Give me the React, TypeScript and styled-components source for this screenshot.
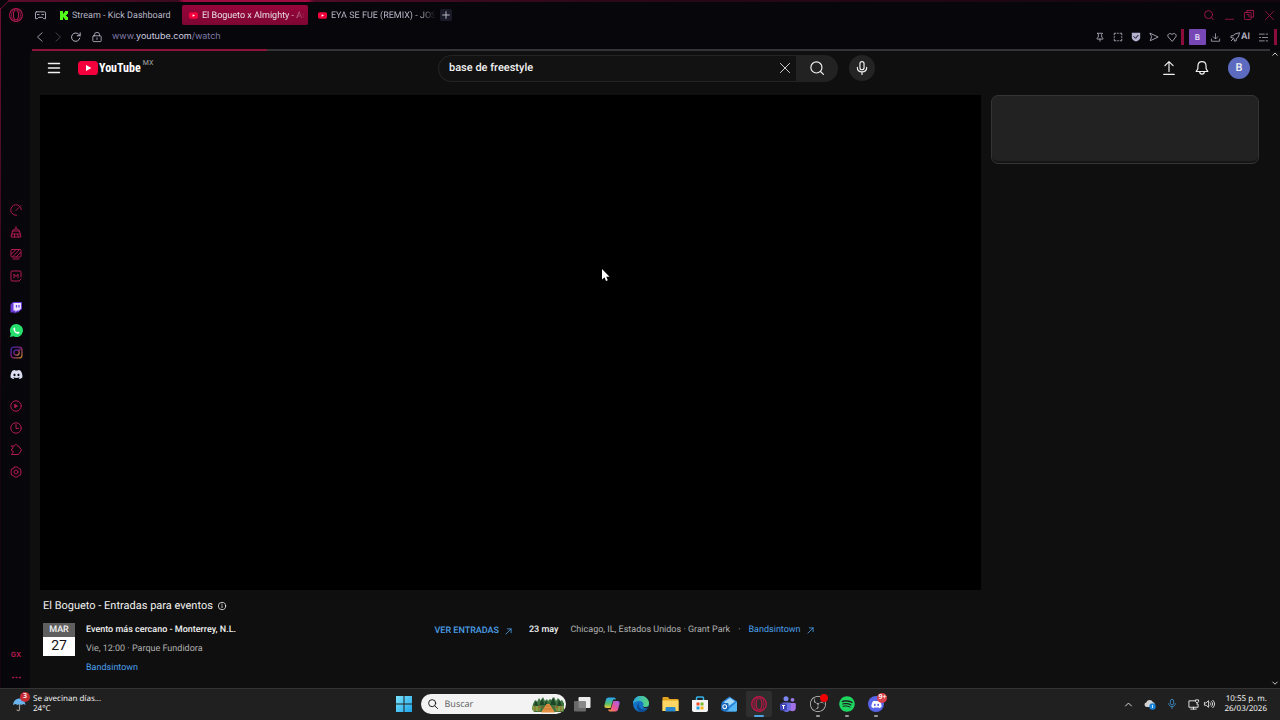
import React from "react";
import styled, { createGlobalStyle, css } from "styled-components";
import { FaDiscord, FaSpotify } from "react-icons/fa";
import { SiObsstudio } from "react-icons/si";

const crimson = "#b31a4e";
const chromeBg = "#06060b";
const pageBg = "#0f0f0f";

const GlobalStyle = createGlobalStyle`
  * { box-sizing: border-box; }
  body {
    margin: 0;
    background: #000;
    color: #f1f1f1;
    font-family: Roboto, "Liberation Sans", sans-serif;
    text-rendering: geometricPrecision;
  }
  button, input { font: inherit; color: inherit; border: 0; padding: 0; background: none; outline: none; text-rendering: inherit; }
  a { text-decoration: none; }
  svg { display: block; flex: none; }
`;

/* ---------- shared ---------- */

const Icon = styled.svg.attrs({ viewBox: "0 0 24 24", "aria-hidden": true })<{ $size?: number; $weight?: number }>`
  width: ${(p) => p.$size ?? 12}px;
  height: ${(p) => p.$size ?? 12}px;
  fill: none;
  stroke: currentColor;
  stroke-width: ${(p) => p.$weight ?? 2};
  stroke-linecap: round;
  stroke-linejoin: round;
  overflow: visible;
`;

const IconButton = styled.button<{ $w?: number; $h?: number }>`
  display: flex;
  align-items: center;
  justify-content: center;
  flex: none;
  width: ${(p) => p.$w ?? 20}px;
  height: ${(p) => p.$h ?? 20}px;
`;

const Screen = styled.div`
  display: flex;
  flex-direction: column;
  min-height: 100vh;
`;

const Browser = styled.div`
  position: relative;
  display: flex;
  flex: 1;
  background: ${chromeBg};
`;

const FrameTop = styled.div`
  position: absolute;
  top: 0;
  left: 8px;
  right: 0;
  height: 2px;
  background: linear-gradient(90deg, #5c0c2b 0, #3a0a1f 170px, #a00a3e 176px, #a00a3e 300px, #4d0b26 306px, #2b0817 600px, #14060e 100%);
`;

const FrameLeft = styled.div`
  position: absolute;
  top: 8px;
  bottom: 0;
  left: 0;
  width: 1px;
  background: linear-gradient(180deg, #6b0f33 0, #3a0a1f 240px, #14060c 400px);
`;

const FrameCorner = styled.svg`
  position: absolute;
  top: 0;
  left: 0;
  width: 10px;
  height: 10px;
  stroke: #7a1038;
  fill: none;
`;

/* ---------- sidebar ---------- */

const Sidebar = styled.aside`
  display: flex;
  flex-direction: column;
  align-items: center;
  flex: none;
  width: 30px;
  padding-left: 2px;
  color: ${crimson};
`;

const SideLogo = styled.button`
  display: flex;
  justify-content: center;
  width: 100%;
  height: 38px;
  padding-top: 8px;
  color: ${crimson};
`;

const SideNav = styled.nav`
  display: flex;
  flex: 1;
  flex-direction: column;
  justify-content: center;
  gap: 10px;
`;

const SideGroup = styled.div`
  display: flex;
  flex-direction: column;
`;

const SideFoot = styled.div`
  display: flex;
  flex-direction: column;
  height: 44px;
  font: 700 7px/8px Inter, sans-serif;
`;

/* ---------- tabs and address bar ---------- */

const Main = styled.div`
  display: flex;
  flex: 1;
  flex-direction: column;
  min-width: 0;
`;

const TabBar = styled.div`
  display: flex;
  align-items: center;
  gap: 3px;
  height: 25px;
  padding: 5px 1px 0 0;
  color: #b8b6c6;
`;

const Tab = styled.button<{ $active?: boolean }>`
  display: flex;
  align-items: center;
  gap: 4px;
  width: 126px;
  height: 20px;
  padding: 0 6px 0 7px;
  border-radius: 2px;
  font: 400 9px/12px Roboto, sans-serif;
  white-space: nowrap;
  ${(p) =>
    p.$active &&
    css`
      background: linear-gradient(180deg, #98053a, #7d0633);
      color: #eadfe6;
    `}
`;

const TabTitle = styled.span<{ $fade?: boolean }>`
  padding-top: 1px;
  text-align: left;
  ${(p) => p.$fade && css`mask-image: linear-gradient(90deg, #000 85%, transparent);`}
`;

const NewTab = styled.button`
  display: flex;
  align-items: center;
  justify-content: center;
  width: 12px;
  height: 12px;
  border-radius: 2px;
  background: #1b1a28;
`;

const Spacer = styled.div`
  flex: 1;
`;

const WindowControls = styled.div`
  display: flex;
  color: ${crimson};
`;

const AddressBar = styled.div`
  display: flex;
  align-items: center;
  height: 24px;
  color: #b8b6c6;
`;

const Url = styled.a`
  margin-left: 4px;
  font: 400 9px/14px Inter, sans-serif;
  color: #7f7aa6;
  b { font-weight: 400; color: #cfcde0; }
`;

const RedBar = styled.span<{ $gap: number }>`
  width: 3px;
  height: 16px;
  margin-right: ${(p) => p.$gap}px;
  background: #8a0d3a;
`;

const ProfileBadge = styled.button`
  width: 17px;
  height: 16px;
  border-radius: 1px;
  background: #7747b5;
  color: #f2ecff;
  font: 500 8px/16px Inter, sans-serif;
`;

const AiButton = styled.button`
  display: flex;
  align-items: center;
  gap: 1px;
  margin: 0 2px 0 4px;
  font: 600 9px/12px Inter, sans-serif;
`;

const LoadLine = styled.div`
  height: 2px;
  margin: 0 10px 0 2px;
  background: linear-gradient(90deg, #8f1239 19%, #343436 19%);
`;

/* ---------- youtube page ---------- */

const Viewport = styled.div`
  display: flex;
  flex: 1;
  background: ${pageBg};
  border-top-left-radius: 3px;
`;

const ScrollTrack = styled.div`
  display: flex;
  flex-direction: column;
  justify-content: space-between;
  flex: none;
  width: 10px;
  padding: 0 2px 2px;
  color: #c8c8c8;
`;

const Page = styled.main`
  flex: 1;
  min-width: 0;
`;

const Masthead = styled.header`
  display: flex;
  align-items: center;
  justify-content: space-between;
  height: 34px;
  padding: 0 20px 0 18px;
`;

const Brand = styled.div`
  display: flex;
  align-items: center;
  gap: 18px;
  width: 103px;
`;

const LogoLink = styled.a`
  display: flex;
  align-items: center;
  color: #fff;
`;

const Wordmark = styled.span`
  margin-left: 1px;
  font: 700 12px/16px "Liberation Sans Narrow", "Roboto Condensed", Roboto, sans-serif;
  text-rendering: auto;
`;

const Country = styled.sup`
  align-self: flex-start;
  margin-left: 2px;
  font: 400 7px/7px Roboto, sans-serif;
  color: #aaa;
`;

const SearchArea = styled.div`
  display: flex;
  align-items: center;
  flex: 0 1 437px;
  gap: 11px;
`;

const SearchForm = styled.form`
  display: flex;
  flex: 1;
  height: 27px;
`;

const SearchBox = styled.div`
  display: flex;
  align-items: center;
  flex: 1;
  border: 1px solid #242424;
  border-right: 0;
  border-radius: 14px 0 0 14px;
  background: #121212;
  input {
    flex: 1;
    min-width: 0;
    padding-left: 10px;
    font: 500 11px/16px Roboto, sans-serif;
  }
`;

const SearchButton = styled.button`
  display: flex;
  align-items: center;
  justify-content: center;
  width: 42px;
  border-radius: 0 14px 14px 0;
  background: #222;
`;

const MicButton = styled.button`
  display: flex;
  align-items: center;
  justify-content: center;
  width: 26px;
  height: 26px;
  border-radius: 50%;
  background: #242424;
`;

const Actions = styled.div`
  display: flex;
  align-items: center;
  gap: 19px;
`;

const Avatar = styled.button`
  width: 22px;
  height: 22px;
  border-radius: 50%;
  background: #5c6bc0;
  font: 500 11px/22px Roboto, sans-serif;
`;

const Watch = styled.div`
  display: flex;
  align-items: flex-start;
  gap: 10px;
  padding: 10px 11px 0 10px;
`;

const Primary = styled.section`
  flex: 1;
  min-width: 0;
`;

const Player = styled.div`
  position: relative;
  aspect-ratio: 19 / 10;
  background: #000;
`;

const Pointer = styled.svg`
  position: absolute;
  left: 561px;
  top: 173px;
  width: 9px;
  height: 14px;
`;

const SideCard = styled.aside`
  flex: none;
  width: 268px;
  height: 69px;
  border: 1px solid #343434;
  border-radius: 7px;
  background: #222;
  box-shadow: inset 0 -2px #151515;
`;

const Events = styled.div`
  padding: 9px 0 0 3px;
`;

const EventsTitle = styled.h2`
  display: flex;
  align-items: center;
  gap: 5px;
  margin: 0;
  font: 400 11px/14px Roboto, sans-serif;
`;

const EventRow = styled.div`
  display: flex;
  align-items: flex-start;
  gap: 17px;
  margin-top: 8px;
`;

const NextEvent = styled.div`
  display: flex;
  align-items: flex-start;
  flex: none;
  width: 50%;
`;

const DateTile = styled.time`
  width: 32px;
  margin: 2px 11px 0 0;
  text-align: center;
  color: #111;
  background: #fff;
  font: 400 14px/19px Roboto, sans-serif;
  span {
    display: block;
    background: #5f5f5f;
    color: #f1f1f1;
    font: 500 9px/14px Roboto, sans-serif;
  }
`;

const EventText = styled.div`
  flex: 1;
  font: 400 9px/19px Roboto, sans-serif;
  color: #b0b0b0;
  strong { display: block; font-weight: 500; color: #f1f1f1; }
`;

const BlueLink = styled.a<{ $strong?: boolean }>`
  display: flex;
  align-items: center;
  gap: 6px;
  color: #4a9fe8;
  font: 400 9px/19px Roboto, sans-serif;
  ${(p) => p.$strong && css`font-weight: 500; line-height: 21px;`}
`;

const LaterEvent = styled.div`
  display: flex;
  font: 400 9px/19px Roboto, sans-serif;
  color: #b0b0b0;
  white-space: nowrap;
  strong { margin-right: 12px; font-weight: 500; color: #f1f1f1; }
  i { margin: 0 8px; font-style: normal; }
`;

/* ---------- taskbar ---------- */

const Taskbar = styled.footer`
  display: grid;
  grid-template-columns: 1fr auto 1fr;
  align-items: center;
  height: 32px;
  box-shadow: inset 0 1px #343434;
  background: #202020;
  font: 400 8px/10px "Noto Sans", sans-serif;
`;

const Weather = styled.button`
  display: flex;
  align-items: center;
  gap: 6px;
  padding-left: 12px;
  text-align: left;
  span { display: block; }
`;

const Badged = styled.div`
  position: relative;
`;

const Badge = styled.em<{ $x: number; $y: number; $bg?: string; $size?: number }>`
  position: absolute;
  top: ${(p) => p.$y}px;
  left: ${(p) => p.$x}px;
  width: ${(p) => p.$size ?? 10}px;
  height: ${(p) => p.$size ?? 10}px;
  border-radius: 50%;
  background: ${(p) => p.$bg ?? "#c42b32"};
  color: #fff;
  text-align: center;
  font: 600 7px/10px "Noto Sans", sans-serif;
`;

const Dock = styled.div`
  display: flex;
  align-items: center;
  gap: 4px;
`;

const TaskSearch = styled.label`
  display: flex;
  align-items: center;
  gap: 7px;
  width: 145px;
  height: 20px;
  padding: 0 2px 0 7px;
  border-radius: 10px;
  background: #f3f3f3;
  color: #222;
  input { flex: 1; min-width: 0; font: 400 9px/14px "Noto Sans", sans-serif; }
  input::placeholder { color: #666; opacity: 1; }
`;

const Apps = styled.div`
  display: flex;
  justify-content: space-between;
  width: 320px;
`;

const DockApp = styled.button<{ $current?: boolean; $running?: boolean }>`
  position: relative;
  display: flex;
  align-items: center;
  justify-content: center;
  width: 26px;
  height: 26px;
  border-radius: 2px;
  background: ${(p) => (p.$current ? "#2e2e2e" : "none")};
  ${(p) =>
    (p.$current || p.$running) &&
    css`
      &::after {
        content: "";
        position: absolute;
        bottom: 0;
        left: 50%;
        width: ${p.$current ? 10 : 4}px;
        height: 2px;
        border-radius: 1px;
        transform: translateX(-50%);
        background: ${p.$current ? "#4ca3e0" : "#9a9a9a"};
      }
    `}
`;

const OperaHolder = styled.span`
  color: #c8144a;
`;

const DiscordDisc = styled.span`
  display: flex;
  align-items: center;
  justify-content: center;
  width: 16px;
  height: 16px;
  border-radius: 50%;
  background: #5865e8;
`;

const Tray = styled.div`
  display: flex;
  align-items: center;
  justify-content: flex-end;
  padding-right: 13px;
`;

const BlueMic = styled.span`
  color: #3f93cf;
`;

const Clock = styled.time`
  width: 52px;
  text-align: right;
  span { display: block; }
`;

/* ---------- drawings ---------- */

const OperaMark = ({ size = 15 }: { size?: number }) => (
  <Icon $size={size} $weight={1.8}>
    <circle cx="12" cy="12" r="11" />
    <ellipse cx="12" cy="12" rx="4.4" ry="8.6" />
    <path d="M14 1.500c4 2 5.600 6 5.600 10.500S18 20.500 14 22.500M10 1.500C6 3.500 4.400 7.500 4.400 12S6 20.500 10 22.500" strokeWidth="1.200" />
  </Icon>
);

const PlayTile = ({ w, h }: { w: number; h: number }) => (
  <svg width={w} height={h} viewBox="0 0 20 14" aria-hidden>
    <rect width="20" height="14" rx="3.600" fill="#f4003d" />
    <path d="M8 4l5.400 3L8 10z" fill="#fff" />
  </svg>
);

const KickMark = () => (
  <svg width="8" height="9" viewBox="0 0 8 9" aria-hidden>
    <path d="M0 0h3v2.500h1v-1.200h1V0h3v3H7v1H6v1h1v1h1v3H5V7.700H4V6.500H3V9H0z" fill="#53fc18" />
  </svg>
);

const TwitchMark = () => (
  <svg width="12" height="12" viewBox="0 0 24 24" aria-hidden>
    <path d="M6 0h18v14l-8 7h-4l-3 3v-3H1V5z" fill="#6a3ad6" />
    <path d="M7 2h15v11l-4 4h-4l-3 3v-3H7z" fill="#e9e1ff" />
    <path d="M13 6v5M18 6v5" stroke="#6a3ad6" strokeWidth="2.400" />
  </svg>
);

const WhatsappMark = () => (
  <svg width="13" height="13" viewBox="0 0 24 24" aria-hidden>
    <path d="M12 0a12 12 0 1 1-5.500 22.700L0 24l1.500-6A12 12 0 0 1 12 0z" fill="#25e06c" />
    <path d="M8 6C5 8 6 12 9 15s7 4 9 1l-3-2-2 1c-2-.8-3-2-4-4l1-1.500z" fill="#fff" />
  </svg>
);

const InstagramMark = () => (
  <svg width="13" height="13" viewBox="0 0 24 24" fill="none" stroke="url(#ig)" strokeWidth="2.400" aria-hidden>
    <defs>
      <linearGradient id="ig" x1="0" y1="0" x2="1" y2="1">
        <stop offset="0" stopColor="#3f2bb0" />
        <stop offset=".5" stopColor="#8a2080" />
        <stop offset="1" stopColor="#b8862a" />
      </linearGradient>
    </defs>
    <rect x="2" y="2" width="20" height="20" rx="5" />
    <circle cx="12" cy="12" r="5" />
    <circle cx="17.500" cy="6.500" r=".6" />
  </svg>
);

const Arrow = () => (
  <Icon $size={7} $weight={2.8}><path d="M3 21L21 3M8 3h13v13" /></Icon>
);

const Umbrella = () => (
  <svg width="15" height="16" viewBox="0 0 15 16" aria-hidden>
    <path d="M1 9C1.500 4.500 4.500 2.500 7.500 2.500S13 4.500 13.500 9l-2-1-2 1-2-1-2 1-2-1z" fill="#68b4ee" />
    <path d="M7.500 8v5.500c0 1.500-2.500 1.500-2.500 0" fill="none" stroke="#9a9a9a" strokeWidth="1.200" />
  </svg>
);

const WindowsMark = () => (
  <svg width="16" height="16" viewBox="0 0 16 16" aria-hidden>
    <defs>
      <linearGradient id="win" x1="0" y1="0" x2="1" y2="1">
        <stop offset="0" stopColor="#7be3fb" />
        <stop offset="1" stopColor="#1ea5ea" />
      </linearGradient>
    </defs>
    <path d="M0 0h7.500v7.500H0zM8.500 0H16v7.500H8.500zM0 8.500h7.500V16H0zM8.500 8.500H16V16H8.500z" fill="url(#win)" />
  </svg>
);

const Forest = () => (
  <svg width="32" height="17" viewBox="0 0 32 17" aria-hidden>
    <path d="M1 8l2-4 2 2 2-4 2 3 2-4 2 4 2-2 1 2 2-2 2 1 2-3 2 4 2-3 2 3 2-1 3 5v5l-2 2H2l-2-3z" fill="#3d7440" />
    <path d="M4 4l-2 6h4zM10 2L7.500 9h5zM14 4l-1.500 5h3zM21 1l-3 8h6zM27 3l-2 7h5z" fill="#1b4429" />
    <path d="M0 10h9l-1 5H1zM23 10h9l-1 5h-7z" fill="#86a348" />
    <path d="M14.500 8h3L23 16.500H9z" fill="#e39142" />
    <path d="M3 9v7M7 9v7M25 9v7M29 9v7M6 11h6M21 11h6" stroke="#8a5a2a" strokeWidth=".8" />
    <path d="M14 10h4M12.500 13h7" stroke="#b56c2c" strokeWidth=".6" />
  </svg>
);

const TaskViewMark = () => (
  <svg width="17" height="15" viewBox="0 0 17 15" aria-hidden>
    <rect x="4.500" y="0" width="12" height="11" rx="1" fill="#ececec" />
    <rect x="0" y="4" width="12" height="10.500" rx="1" fill="#777" opacity=".85" />
  </svg>
);

const CopilotMark = () => (
  <svg width="16" height="15" viewBox="0 0 16 15" aria-hidden>
    <defs>
      <linearGradient id="cpl" x1="0" y1="0" x2="0" y2="1">
        <stop offset="0" stopColor="#27a5f5" />
        <stop offset=".6" stopColor="#58c06a" />
        <stop offset="1" stopColor="#f1c53a" />
      </linearGradient>
      <linearGradient id="cpr" x1="1" y1="0" x2="0" y2="1">
        <stop offset="0" stopColor="#a05cf0" />
        <stop offset=".6" stopColor="#f0588c" />
        <stop offset="1" stopColor="#f99a3c" />
      </linearGradient>
    </defs>
    <path d="M4.500.5H10c1.200 0 1.600.8 1.900 2H9.200L6.600 11H2.500C.8 11 0 9.800.5 8l1.500-5.500C2.400 1.200 3.200.5 4.500.5z" fill="url(#cpl)" />
    <path d="M11.500 14.500H6c-1.200 0-1.600-.8-1.900-2h2.700L9.400 4h4.100c1.700 0 2.500 1.200 2 3L14 12.500c-.4 1.300-1.200 2-2.500 2z" fill="url(#cpr)" />
  </svg>
);

const EdgeMark = () => (
  <svg width="16" height="16" viewBox="0 0 16 16" aria-hidden>
    <defs>
      <linearGradient id="edg" x1="0" y1="0" x2="1" y2="0">
        <stop offset="0" stopColor="#2aa5df" />
        <stop offset="1" stopColor="#5bd67b" />
      </linearGradient>
    </defs>
    <circle cx="8" cy="8" r="8" fill="#1471c4" />
    <path d="M0 8a8 8 0 0 1 16-.500c0 2.500-2 3.500-4 3.500-1.500 0-2.500-.8-2-1.500C11.200 7.500 9.500 5 6.500 5 3 5 .5 6.500 0 8z" fill="url(#edg)" />
    <path d="M6.500 6.500C5 8 5.500 13 10 13.500c2 .2 4-.500 5-2-1.500 3-4.500 4.500-7 4.500-4-1-5.500-6.500-1.500-9.500z" fill="#0b4a94" />
    <path d="M10 10c1.500 1.500 4 1.500 5.500.500l-.800 1.500c-2 1-4.200.3-4.700-2z" fill="#202020" />
  </svg>
);

const FolderMark = () => (
  <svg width="17" height="15" viewBox="0 0 17 15" aria-hidden>
    <path d="M.5 1C.5.5 1 0 1.500 0H6l1.500 2H15.500c.6 0 1 .4 1 1v11H.5z" fill="#e2a21d" />
    <path d="M.5 3.500h16V14H.5z" fill="#fbd664" />
    <path d="M3.500 14.500v-3c0-1 .5-1.500 1.500-1.500h7c1 0 1.500.5 1.500 1.500v3z" fill="#2787cc" />
  </svg>
);

const StoreMark = () => (
  <svg width="16" height="16" viewBox="0 0 16 16" aria-hidden>
    <path d="M4.500 4V2c0-.6.400-1 1-1h5c.6 0 1 .4 1 1v2" fill="none" stroke="#35b3ea" strokeWidth="1.500" />
    <path d="M0 4h16v10c0 1-.8 2-2 2H2c-1.200 0-2-1-2-2z" fill="#f4f4f4" />
    <path d="M4.500 6.500h3v3h-3z" fill="#ee4d2c" /><path d="M8.500 6.500h3v3h-3z" fill="#7cb928" />
    <path d="M4.500 10.500h3v3h-3z" fill="#219fe3" /><path d="M8.500 10.500h3v3h-3z" fill="#f9b51c" />
  </svg>
);

const OutlookMark = () => (
  <svg width="16" height="16" viewBox="0 0 16 16" aria-hidden>
    <path d="M1 6l7.500-5.500L16 5.500V14c0 1-.8 1.500-1.500 1.500H3L1 14z" fill="#2b84dc" />
    <path d="M3 6l6-4 5 3.500-7 5z" fill="#a5dafa" />
    <path d="M16 6v8c0 1-.8 1.500-1.500 1.500H5z" fill="#56b6f3" />
    <rect x="0" y="7" width="7.500" height="7.500" rx="1.200" fill="#1764ba" />
    <circle cx="3.700" cy="10.700" r="1.900" fill="none" stroke="#fff" strokeWidth="1.100" />
  </svg>
);

const TeamsMark = () => (
  <svg width="16" height="16" viewBox="0 0 16 16" aria-hidden>
    <circle cx="6" cy="2.700" r="2.500" fill="#7c86f0" /><circle cx="12.500" cy="3.800" r="1.900" fill="#9a7bea" />
    <path d="M9 7h5.500c.8 0 1.300.500 1.300 1.300V12c0 2-1.500 3.300-3.300 3.300S9 14 9 12z" fill="#a370e8" />
    <path d="M2.500 6.500h7c.7 0 1.200.5 1.200 1.200V12c0 2.200-1.800 4-4.200 4s-4-1.800-4-4z" fill="#6c6fe4" />
    <rect x="0" y="7.500" width="7" height="7" rx="1" fill="#4046b8" />
    <path d="M2 9.500h3M3.500 9.500v3.500" stroke="#fff" />
  </svg>
);

const CloudMark = () => (
  <svg width="12" height="11" viewBox="0 0 12 11" aria-hidden>
    <path d="M2.500 8a2.300 2.300 0 0 1-.3-4.500A3.500 3.500 0 0 1 8.800 3 2.600 2.600 0 0 1 9 8z" fill="#d2d2d2" />
    <circle cx="8.500" cy="7.500" r="3.200" fill="#1682d8" />
    <path d="M8.500 6v3" stroke="#fff" strokeWidth=".8" />
  </svg>
);

const sideTools = [
  ["GX Control", <><path d="M22.500 11A10.500 10.500 0 1 0 13 22.500" /><path d="M12 13l6-6M21 4l1-1" /></>],
  ["GX Cleaner", <><path d="M12 1v5M6 10c0-3 2-4 6-4s6 1 6 4M5 10h14M5 10L2 22h20l-3-12M4 16h16M9 17v5M15 17l2 5" /></>],
  ["Fondos", <><rect x="2" y="3" width="20" height="15" rx="2" /><path d="M6 22h12M3 12l8-8M6 17L18 4M13 17l8-8" /></>],
  ["GX Mods", <><path d="M22 14V4a2 2 0 0 0-2-2H4a2 2 0 0 0-2 2v16a2 2 0 0 0 2 2h14l4-4" /><path d="M8 16V8l4 5 4-5v8" /></>],
] as const;

const sideExtras = [
  ["Reproductor", <><circle cx="12" cy="12" r="10.500" /><path d="M10 9l5 3-5 3z" fill="currentColor" /></>],
  ["Historial", <><circle cx="12" cy="12" r="10.500" /><path d="M12 5v8h5" /></>],
  ["Extensiones", <path d="M3 4h6c0-4 6-4 6 0h2l6 8-6 9H3l4-6-5-3 4-4z" />],
  ["Configuración", <><path d="M9 2h6l2 3 4 1 1 6-1 6-4 1-2 3H9l-2-3-4-1-1-6 1-6 4-1z" /><circle cx="12" cy="12" r="4" /></>],
] as const;

const SideIcon = ({ label, children }: { label: string; children: React.ReactNode }) => (
  <IconButton $w={22} $h={22} aria-label={label}>{children}</IconButton>
);

const addressTools = [
  ["Fijar", <path d="M6 3h12l-2 3v6l3 3v2H5v-2l3-3V6zM12 17v5" />],
  ["Captura", <path d="M3 7V3h4M17 3h4v4M21 17v4h-4M7 21H3v-4M11 3h2M11 21h2M3 11v2M21 11v2" />],
  ["Escudo", <><path d="M2 2h20v11c0 5-5 8-10 10C7 21 2 18 2 13z" fill="#b4b0cf" stroke="none" /><path d="M7 11l4 4 6-7" stroke={chromeBg} strokeWidth="2.400" /></>],
  ["Mi Flow", <path d="M3 3l19 9-19 9 3-9z" />],
  ["Favoritos", <path d="M12 22L3 12C-1 7 6 0 12 6c6-6 13 1 9 6z" />],
] as const;

/* ---------- page ---------- */

export default function App() {
  return (
    <Screen>
      <GlobalStyle />
      <Browser>
        <Sidebar>
          <SideLogo aria-label="Opera GX"><OperaMark size={14} /></SideLogo>
          <SideNav aria-label="Barra lateral">
            <SideGroup>
              {sideTools.map(([label, art]) => (
                <SideIcon key={label} label={label}><Icon $size={12}>{art}</Icon></SideIcon>
              ))}
            </SideGroup>
            <SideGroup>
              <SideIcon label="Twitch"><TwitchMark /></SideIcon>
              <SideIcon label="WhatsApp"><WhatsappMark /></SideIcon>
              <SideIcon label="Instagram"><InstagramMark /></SideIcon>
              <SideIcon label="Discord"><FaDiscord size={13} color="#dcdcf2" /></SideIcon>
            </SideGroup>
            <SideGroup>
              {sideExtras.map(([label, art]) => (
                <SideIcon key={label} label={label}><Icon $size={12}>{art}</Icon></SideIcon>
              ))}
            </SideGroup>
          </SideNav>
          <SideFoot>
            <IconButton $w={22} $h={22}>GX</IconButton>
            <IconButton $w={22} $h={22} aria-label="Más">
              <Icon $size={9}><path d="M2 12h2M11 12h2M20 12h2" strokeWidth="4" /></Icon>
            </IconButton>
          </SideFoot>
        </Sidebar>

        <Main>
          <TabBar>
            <IconButton aria-label="GX Corner">
              <Icon $size={11}><path d="M3 4h18a2 2 0 0 1 2 2v13h-4l-3-3H8l-3 3H1V6a2 2 0 0 1 2-2zM5 10h4M15 10h4" /></Icon>
            </IconButton>
            <Tab><KickMark /><TabTitle>Stream - Kick Dashboard</TabTitle></Tab>
            <Tab $active><PlayTile w={9} h={7} /><TabTitle $fade>El Bogueto x Almighty - Ar</TabTitle></Tab>
            <Tab><PlayTile w={9} h={7} /><TabTitle $fade>EYA SE FUE (REMIX) - JOS</TabTitle></Tab>
            <NewTab aria-label="Nueva pestaña"><Icon $size={8} $weight={3}><path d="M12 2v20M2 12h20" /></Icon></NewTab>
            <Spacer />
            <WindowControls>
              <IconButton aria-label="Buscar pestañas"><Icon $size={10}><circle cx="11" cy="11" r="9.500" /><path d="M18 18l4 5" /></Icon></IconButton>
              <IconButton aria-label="Minimizar"><Icon $size={9}><path d="M1 22h22" /></Icon></IconButton>
              <IconButton aria-label="Restaurar"><Icon $size={10}><rect x="1" y="6" width="16" height="17" rx="2" /><path d="M7 6V1h16v16h-6M7 11h5v6" /></Icon></IconButton>
              <IconButton aria-label="Cerrar"><Icon $size={9}><path d="M1 1l22 22M23 1L1 23" /></Icon></IconButton>
            </WindowControls>
          </TabBar>
          <AddressBar>
            <IconButton $w={19} aria-label="Atrás"><Icon $size={10}><path d="M17 2L6 12l11 10" /></Icon></IconButton>
            <IconButton $w={17} aria-label="Adelante"><Icon $size={10} opacity=".4"><path d="M7 2l11 10L7 22" /></Icon></IconButton>
            <IconButton $w={19} aria-label="Recargar"><Icon $size={10} $weight={2.4}><path d="M21 15a10 10 0 1 1-2-9l3 3M22 2v7h-7" /></Icon></IconButton>
            <IconButton $w={23} aria-label="Sitio seguro"><Icon $size={10}><rect x="2" y="9" width="20" height="14" rx="2" /><path d="M6 9V6a6 5 0 0 1 12 0v3M12 14v4" /></Icon></IconButton>
            <Url href="#watch">www.<b>youtube.com</b>/watch</Url>
            <Spacer />
            {addressTools.map(([label, art]) => (
              <IconButton key={label} $w={18} aria-label={label}><Icon $size={10}>{art}</Icon></IconButton>
            ))}
            <RedBar $gap={5} />
            <ProfileBadge>B</ProfileBadge>
            <IconButton aria-label="Descargas"><Icon $size={9}><path d="M12 2v13M6 10l6 6 6-6M1 16v6h22v-6" /></Icon></IconButton>
            <AiButton>
              <Icon $size={10}><path d="M22 2L11 5 8 9H3l-1 4 7 2 2 7 4-1v-5l4-3zM3 21l4-4" /></Icon>AI
            </AiButton>
            <IconButton $w={22} aria-label="Configuración fácil"><Icon $size={9}><path d="M1 3h13M19 3h4M1 12h3M9 12h14M1 21h13M19 21h4" /></Icon></IconButton>
            <RedBar $gap={3} />
          </AddressBar>
          <LoadLine />

          <Viewport>
            <Page>
              <Masthead>
                <Brand>
                  <button aria-label="Guía"><Icon $size={12} $weight={3}><path d="M1 3h22M1 12h22M1 21h22" /></Icon></button>
                  <LogoLink href="#home">
                    <PlayTile w={20} h={14} /><Wordmark>YouTube</Wordmark><Country>MX</Country>
                  </LogoLink>
                </Brand>
                <SearchArea>
                  <SearchForm onSubmit={(e) => e.preventDefault()}>
                    <SearchBox>
                      <input aria-label="Buscar" defaultValue="base de freestyle" />
                      <IconButton type="button" $w={22} aria-label="Borrar"><Icon $size={10}><path d="M1 1l22 22M23 1L1 23" /></Icon></IconButton>
                    </SearchBox>
                    <SearchButton aria-label="Buscar"><Icon $size={14}><circle cx="11" cy="11" r="9.500" /><path d="M18 18l5 5" /></Icon></SearchButton>
                  </SearchForm>
                  <MicButton aria-label="Buscar por voz">
                    <Icon $size={14}><rect x="8.500" y="1" width="7" height="14" rx="3.500" /><path d="M4 11c0 10 16 10 16 0M12 19v4" /></Icon>
                  </MicButton>
                </SearchArea>
                <Actions>
                  <IconButton $w={14} aria-label="Crear"><Icon $size={14}><path d="M12 18V1M5 8l7-7 7 7M3 23h18" /></Icon></IconButton>
                  <IconButton $w={14} aria-label="Notificaciones"><Icon $size={14}><path d="M12 1c-5 0-7 4-7 8v4l-3 5h20l-3-5V9c0-4-2-8-7-8zM8 18c0 6 8 6 8 0" /></Icon></IconButton>
                  <Avatar>B</Avatar>
                </Actions>
              </Masthead>
              <Watch>
                <Primary>
                  <Player>
                    <Pointer viewBox="0 0 9 14"><path d="M1 1v10.500l2.500-2.200L5 13l1.800-.8L5.200 8.700h3.300z" fill="#fff" /></Pointer>
                  </Player>
                  <Events>
                    <EventsTitle>
                      El Bogueto - Entradas para eventos
                      <Icon $size={8} $weight={2.4}><circle cx="12" cy="12" r="11" /><path d="M12 11v6M12 6v1" /></Icon>
                    </EventsTitle>
                    <EventRow>
                      <NextEvent>
                        <DateTile><span>MAR</span>27</DateTile>
                        <EventText>
                          <strong>Evento más cercano - Monterrey, N.L.</strong>
                          <div>Vie, 12:00 · Parque Fundidora</div>
                          <BlueLink href="#bandsintown">Bandsintown</BlueLink>
                        </EventText>
                        <BlueLink $strong href="#entradas">VER ENTRADAS <Arrow /></BlueLink>
                      </NextEvent>
                      <LaterEvent>
                        <strong>23 may</strong>
                        <span>Chicago, IL, Estados Unidos · Grant Park</span>
                        <i>·</i>
                        <BlueLink href="#grant-park">Bandsintown <Arrow /></BlueLink>
                      </LaterEvent>
                    </EventRow>
                  </Events>
                </Primary>
                <SideCard />
              </Watch>
            </Page>
            <ScrollTrack>
              <Icon $size={6} $weight={4}><path d="M3 17l9-9 9 9" /></Icon>
              <Icon $size={6} $weight={4}><path d="M3 8l9 9 9-9" /></Icon>
            </ScrollTrack>
          </Viewport>
        </Main>
        <FrameTop />
        <FrameLeft />
        <FrameCorner viewBox="0 0 10 10"><path d="M.5 9L9 .5" /></FrameCorner>
      </Browser>

      <Taskbar>
        <Weather>
          <Badged><Umbrella /><Badge $x={8} $y={-4}>3</Badge></Badged>
          <div><span>Se avecinan días...</span><span>24°C</span></div>
        </Weather>
        <Dock>
          <DockApp aria-label="Inicio"><WindowsMark /></DockApp>
          <TaskSearch>
            <Icon $size={10} $weight={2.4}><circle cx="10" cy="10" r="8.500" /><path d="M17 17l6 6" /></Icon>
            <input placeholder="Buscar" aria-label="Buscar" />
            <Forest />
          </TaskSearch>
          <Apps>
            <DockApp aria-label="Vista de tareas"><TaskViewMark /></DockApp>
            <DockApp aria-label="Copilot"><CopilotMark /></DockApp>
            <DockApp aria-label="Edge"><EdgeMark /></DockApp>
            <DockApp aria-label="Explorador"><FolderMark /></DockApp>
            <DockApp aria-label="Store"><StoreMark /></DockApp>
            <DockApp aria-label="Outlook"><OutlookMark /></DockApp>
            <DockApp $current aria-label="Opera GX"><OperaHolder><OperaMark size={16} /></OperaHolder></DockApp>
            <DockApp aria-label="Teams"><TeamsMark /></DockApp>
            <DockApp $running aria-label="OBS"><SiObsstudio size={16} color="#c9c9c9" /><Badge $x={15} $y={3} $size={8} $bg="#f00000" /></DockApp>
            <DockApp $running aria-label="Spotify"><FaSpotify size={16} color="#1ed760" /></DockApp>
            <DockApp $running aria-label="Discord"><DiscordDisc><FaDiscord size={11} color="#fff" /></DiscordDisc><Badge $x={14} $y={2} $bg="#d8404a">9+</Badge></DockApp>
          </Apps>
        </Dock>
        <Tray>
          <IconButton $w={21} aria-label="Iconos ocultos"><Icon $size={7} $weight={3}><path d="M2 17L12 7l10 10" /></Icon></IconButton>
          <IconButton $w={22} aria-label="OneDrive"><CloudMark /></IconButton>
          <IconButton $w={22} aria-label="Micrófono"><BlueMic><Icon $size={10}><rect x="8" y="1" width="8" height="13" rx="4" /><path d="M4 11c0 10 16 10 16 0M12 19v4" /></Icon></BlueMic></IconButton>
          <IconButton $w={20} aria-label="Red"><Icon $size={11}><path d="M15 4H2v14h20v-6M6 22h12M12 18v4M17 2h6v4l-3 3-3-3zM20 9v3" /></Icon></IconButton>
          <IconButton $w={12} aria-label="Volumen"><Icon $size={10}><path d="M1 9v6h4l6 5V4L5 9zM15 9c2 2 2 4 0 6M18 6c4 4 4 8 0 12M21 3c6 6 6 12 0 18" /></Icon></IconButton>
          <Clock><span>10:55 p. m.</span><span>26/03/2026</span></Clock>
        </Tray>
      </Taskbar>
    </Screen>
  );
}
